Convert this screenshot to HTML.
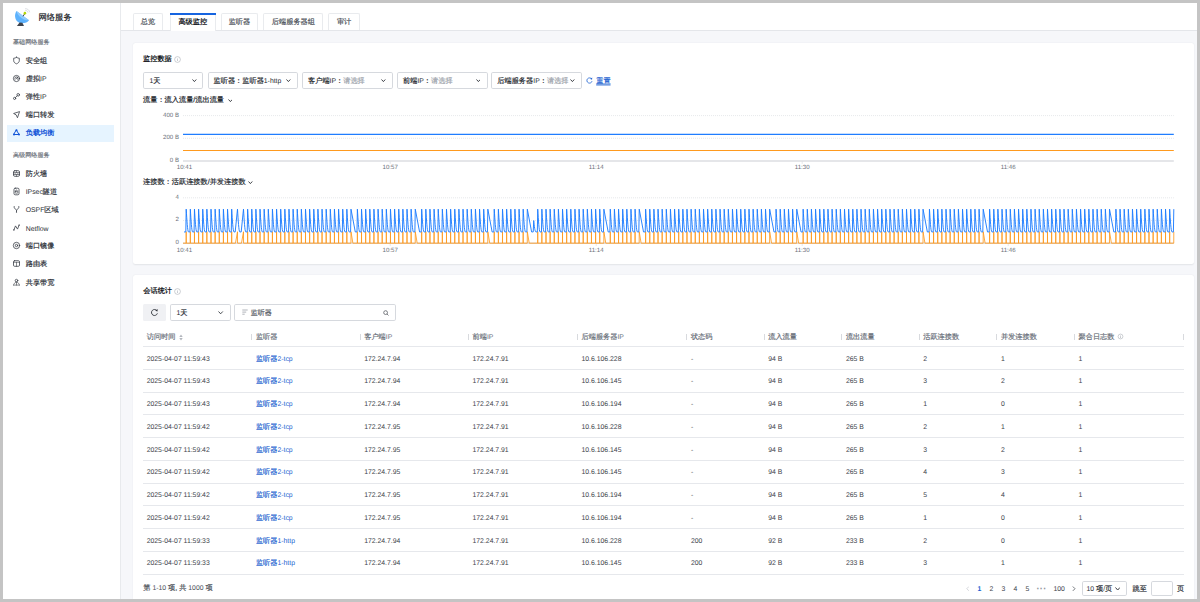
<!DOCTYPE html><html><head><meta charset="utf-8"><title>网络服务</title><style>
*{box-sizing:border-box;margin:0;padding:0}
html,body{width:1200px;height:602px;overflow:hidden;background:#c4c4c4}
body{text-rendering:geometricPrecision;font-family:"Liberation Sans",sans-serif;font-size:7.2px;color:#24282e;-webkit-text-stroke:0.18px;position:relative;line-height:1}
.l{font-size:6.85px;line-height:0}
.c{font-size:7.2px;line-height:0;-webkit-text-stroke:0.18px}
.num,.ax,.l{-webkit-text-stroke:0}
#app{position:absolute;left:3px;top:3px;width:1194px;height:596px;background:#f6f7fa;overflow:hidden}
.abs{position:absolute}
#side{position:absolute;left:0;top:0;width:118px;height:596px;background:#fff;border-right:1px solid #e8eaed}
#tabs{position:absolute;left:118px;top:0;width:1077px;height:27.5px;background:#fff;border-bottom:1px solid #e4e6ea}
.t{position:absolute;white-space:nowrap;transform:translateY(-50%)}
.sec{color:#6b717a;font-size:6.1px}
.mi{color:#2b2f36}
.card{position:absolute;background:#fff;border-radius:2.5px;box-shadow:0 0.5px 1.6px rgba(30,40,60,.09)}
.tab{position:absolute;top:10.4px;height:17.1px;border:1px solid #e9ebee;border-bottom:none;border-radius:2px 2px 0 0;background:#fff;text-align:center;line-height:16px;color:#4a4f57}
.tab.on{background:#fff;color:#15181d;font-weight:bold;height:18.1px;-webkit-text-stroke:0}
.sel{position:absolute;border:1px solid #d6d9de;border-radius:1.8px;background:#fff}
.ph{color:#a0a5ad}
.b{font-weight:bold;color:#15181d;-webkit-text-stroke:0}
.ax{color:#6b7079;font-size:6.1px}
.th{color:#6a707a}
.num{font-size:6.85px;color:#40444b}
.lnk{color:#1b5fd0}
.hl{position:absolute;height:1px;background:#e6e8ec}
</style></head><body><div id="app">
<div id="side"></div>
<div class="abs" style="left:4px;top:122px;width:107.2px;height:16.7px;background:#e6f4ff"></div>
<svg class="abs" style="left:7px;top:1px" width="30" height="26" viewBox="0 0 30 26">
<path d="M6.5 6.9 C3.2 11.6 5.6 19.2 12.1 19.2 C15.2 19.2 17.8 17.9 19 16.2 Z" fill="#5db2fd"/>
<path d="M6.5 6.9 L19 16.2 C14.6 16.9 7.4 12.4 6.5 6.9Z" fill="#8fcbff"/>
<path d="M9.6 18.5 L6.9 21.9 L14 21.9 L12.4 18.8Z" fill="#3f444c"/>
<path d="M13 12.3 L14.7 9.8" stroke="#454a52" stroke-width="1" fill="none"/>
<circle cx="14.9" cy="9.15" r="1.3" fill="#b4d90a"/>
<path d="M15.1 6.3 C16.9 6.3 17.9 7.4 18 8.6 M15.1 4.6 C17.8 4.6 19.6 6.5 19.7 8.3" stroke="#c3c7cd" stroke-width="0.55" fill="none"/>
</svg>
<svg class="abs" style="left:8.70px;top:53.10px" width="9" height="9" viewBox="-4.5 -4.5 9 9" fill="none" stroke="#3a3f47" stroke-width="0.8" stroke-linejoin="round" stroke-linecap="round"><path d="M0 -3.2 C1 -2.5 2 -2.3 2.8 -2.3 V0.2 C2.8 1.8 1.4 2.8 0 3.3 C-1.4 2.8 -2.8 1.8 -2.8 0.2 V-2.3 C-2 -2.3 -1 -2.5 0 -3.2Z"/></svg>
<svg class="abs" style="left:8.70px;top:71.40px" width="9" height="9" viewBox="-4.5 -4.5 9 9" fill="none" stroke="#3a3f47" stroke-width="0.8" stroke-linejoin="round" stroke-linecap="round"><circle r="3.1"/><path d="M-1.6 0.6 A1.7 1.7 0 1 1 1.5 1 M-0.2 0.4 L1.4 -1.4"/></svg>
<svg class="abs" style="left:8.70px;top:89.10px" width="9" height="9" viewBox="-4.5 -4.5 9 9" fill="none" stroke="#3a3f47" stroke-width="0.8" stroke-linejoin="round" stroke-linecap="round"><circle cx="1.7" cy="-1.7" r="1.3"/><circle cx="-1.9" cy="1.9" r="1.1"/><path d="M0.7 -0.7 L-1.1 1.1"/></svg>
<svg class="abs" style="left:8.80px;top:106.90px" width="9" height="9" viewBox="-4.5 -4.5 9 9" fill="none" stroke="#3a3f47" stroke-width="0.8" stroke-linejoin="round" stroke-linecap="round"><path d="M2.7 -2.8 L-2.9 -1 L-0.4 0.3 L0.8 2.9 Z" stroke-width="0.8"/></svg>
<svg class="abs" style="left:8.80px;top:125.30px" width="9" height="9" viewBox="-4.5 -4.5 9 9" fill="none" stroke="#1456d8" stroke-width="0.8" stroke-linejoin="round" stroke-linecap="round"><path d="M0 -2.3 L2.5 2 H-2.5Z" stroke-width="1"/><circle cx="0" cy="-2.3" r="1" fill="#1456d8" stroke="none"/><circle cx="2.5" cy="2" r="1" fill="#1456d8" stroke="none"/><circle cx="-2.5" cy="2" r="1" fill="#1456d8" stroke="none"/></svg>
<svg class="abs" style="left:9.00px;top:165.70px" width="9" height="9" viewBox="-4.5 -4.5 9 9" fill="none" stroke="#3a3f47" stroke-width="0.8" stroke-linejoin="round" stroke-linecap="round"><rect x="-3" y="-2.8" width="6" height="5.6" rx="1.3"/><path d="M-3 -0.9H3M-3 1H3M0 -2.8V-0.9M-1.4 -0.9V1M1.4 -0.9V1M0 1V2.8" stroke-width="0.55"/></svg>
<svg class="abs" style="left:8.90px;top:183.90px" width="9" height="9" viewBox="-4.5 -4.5 9 9" fill="none" stroke="#3a3f47" stroke-width="0.8" stroke-linejoin="round" stroke-linecap="round"><rect x="-2.5" y="-3.3" width="5" height="6.6" rx="1.2"/><rect x="-1.2" y="-0.2" width="2.4" height="1.9" rx="0.3" stroke-width="0.6"/><path d="M-0.7 -0.2 V-0.9 A0.7 0.7 0 0 1 0.7 -0.9 V-0.2" stroke-width="0.55"/></svg>
<svg class="abs" style="left:8.80px;top:202.30px" width="9" height="9" viewBox="-4.5 -4.5 9 9" fill="none" stroke="#3a3f47" stroke-width="0.8" stroke-linejoin="round" stroke-linecap="round"><path d="M-2.3 -3 V-2 C-2.3 -0.6 0 -0.4 0 0.8 V2.2 M2.3 -3 V-2 C2.3 -0.6 0 -0.4 0 0.8"/><circle cx="0" cy="2.6" r="0.6" fill="#3a3f47" stroke="none"/></svg>
<svg class="abs" style="left:9.10px;top:220.00px" width="9" height="9" viewBox="-4.5 -4.5 9 9" fill="none" stroke="#3a3f47" stroke-width="0.8" stroke-linejoin="round" stroke-linecap="round"><path d="M-2.6 2.4 L-1 -1.6 L1 1.6 L2.6 -2.4" stroke-width="0.8"/><circle cx="-2.6" cy="2.4" r="0.7" fill="#3a3f47" stroke="none"/><circle cx="2.6" cy="-2.4" r="0.7" fill="#3a3f47" stroke="none"/></svg>
<svg class="abs" style="left:9.10px;top:238.30px" width="9" height="9" viewBox="-4.5 -4.5 9 9" fill="none" stroke="#3a3f47" stroke-width="0.8" stroke-linejoin="round" stroke-linecap="round"><circle r="3.2"/><circle r="1.2"/></svg>
<svg class="abs" style="left:9.10px;top:256.20px" width="9" height="9" viewBox="-4.5 -4.5 9 9" fill="none" stroke="#3a3f47" stroke-width="0.8" stroke-linejoin="round" stroke-linecap="round"><rect x="-3" y="-2.8" width="6" height="5.6" rx="1.1"/><path d="M-3 -1.2H3M0 -1.2V2.8" stroke-width="0.6"/></svg>
<svg class="abs" style="left:9.10px;top:274.60px" width="9" height="9" viewBox="-4.5 -4.5 9 9" fill="none" stroke="#3a3f47" stroke-width="0.8" stroke-linejoin="round" stroke-linecap="round"><circle cx="0" cy="-1.9" r="1.3"/><path d="M0 -0.6 V2.6 M-3 2.6 H3 M-0.6 -0.2 C-2 0.3 -2.8 1.3 -2.9 2.5 M0.6 -0.2 C2 0.3 2.8 1.3 2.9 2.5" stroke-width="0.6"/></svg>
<div id="t1" class="t " style="left:35.40px;top:13.60px;font-size:8.35px;color:#15181d">网络服务</div>
<div id="t2" class="t sec" style="left:10.00px;top:40.00px;">基础网络服务</div>
<div id="t3" class="t sec" style="left:10.00px;top:152.60px;">高级网络服务</div>
<div id="t4" class="t mi" style="left:22.70px;top:58.00px;">安全组</div>
<div id="t5" class="t mi" style="left:22.70px;top:76.40px;">虚拟<span class="l">IP</span></div>
<div id="t6" class="t mi" style="left:22.70px;top:94.10px;">弹性<span class="l">IP</span></div>
<div id="t7" class="t mi" style="left:22.70px;top:112.30px;">端口转发</div>
<div id="t8" class="t " style="left:22.70px;top:130.30px;color:#1456d8;font-weight:bold;-webkit-text-stroke:0">负载均衡</div>
<div id="t9" class="t mi" style="left:22.70px;top:170.70px;">防火墙</div>
<div id="t10" class="t mi" style="left:22.70px;top:188.70px;"><span class="l">IPsec</span>隧道</div>
<div id="t11" class="t mi" style="left:22.70px;top:206.80px;"><span class="l">OSPF</span>区域</div>
<div id="t12" class="t mi" style="left:22.70px;top:225.70px;"><span class="l">Netflow</span></div>
<div id="t13" class="t mi" style="left:22.70px;top:243.40px;">端口镜像</div>
<div id="t14" class="t mi" style="left:22.70px;top:261.10px;">路由表</div>
<div id="t15" class="t mi" style="left:22.70px;top:279.50px;">共享带宽</div>
<div id="tabs"></div>
<div class="tab" style="left:129.80px;width:30.50px">总览</div>
<div class="tab on" style="left:166.80px;width:46.00px">高级监控</div>
<div class="abs" style="left:166.80px;top:10.2px;width:46.00px;height:1.4px;background:#1664e0"></div>
<div class="tab" style="left:217.50px;width:37.90px">监听器</div>
<div class="tab" style="left:260.40px;width:60.00px">后端服务器组</div>
<div class="tab" style="left:325.40px;width:31.40px">审计</div>
<div class="card" style="left:130.3px;top:40px;width:1061.2px;height:220.9px"></div>
<div id="t16" class="t b" style="left:140.00px;top:56.00px;">监控数据</div>
<svg class="abs" style="left:170.80px;top:52.50px" width="7" height="7" viewBox="0 0 7 7"><circle cx="3.5" cy="3.5" r="2.90" fill="none" stroke="#a4a9b1" stroke-width="0.55"/><path d="M3.5 3.1V5M3.5 2V2.5" stroke="#a4a9b1" stroke-width="0.6"/></svg>
<div class="sel" style="left:139.50px;top:69.10px;width:60.50px;height:16.60px"></div>
<div id="t17" class="t " style="left:146.50px;top:77.50px;"><span class="l">1</span>天</div>
<svg class="abs" style="left:189.10px;top:76.15px" width="4.80" height="3.10" viewBox="0 0 4.80 3.10"><path d="M0.5 0.5 L2.40 2.60 L4.30 0.5" fill="none" stroke="#2b2f36" stroke-width="0.90"/></svg>
<div class="sel" style="left:204.50px;top:69.10px;width:90.50px;height:16.60px"></div>
<div id="t18" class="t " style="left:210.50px;top:77.50px;">监听器：监听器<span class="l">1-http</span></div>
<svg class="abs" style="left:283.10px;top:76.15px" width="4.80" height="3.10" viewBox="0 0 4.80 3.10"><path d="M0.5 0.5 L2.40 2.60 L4.30 0.5" fill="none" stroke="#2b2f36" stroke-width="0.90"/></svg>
<div class="sel" style="left:299.00px;top:69.10px;width:90.50px;height:16.60px"></div>
<div id="t19" class="t " style="left:305.00px;top:77.50px;">客户端<span class="l">IP</span>：<span class="ph">请选择</span></div>
<svg class="abs" style="left:378.10px;top:76.15px" width="4.80" height="3.10" viewBox="0 0 4.80 3.10"><path d="M0.5 0.5 L2.40 2.60 L4.30 0.5" fill="none" stroke="#2b2f36" stroke-width="0.90"/></svg>
<div class="sel" style="left:394.00px;top:69.10px;width:90.50px;height:16.60px"></div>
<div id="t20" class="t " style="left:400.00px;top:77.50px;">前端<span class="l">IP</span>：<span class="ph">请选择</span></div>
<svg class="abs" style="left:472.60px;top:76.15px" width="4.80" height="3.10" viewBox="0 0 4.80 3.10"><path d="M0.5 0.5 L2.40 2.60 L4.30 0.5" fill="none" stroke="#2b2f36" stroke-width="0.90"/></svg>
<div class="sel" style="left:488.30px;top:69.10px;width:90.70px;height:16.60px"></div>
<div id="t21" class="t " style="left:494.30px;top:77.50px;">后端服务器<span class="l">IP</span>：<span class="ph">请选择</span></div>
<svg class="abs" style="left:566.90px;top:76.15px" width="4.80" height="3.10" viewBox="0 0 4.80 3.10"><path d="M0.5 0.5 L2.40 2.60 L4.30 0.5" fill="none" stroke="#2b2f36" stroke-width="0.90"/></svg>
<svg class="abs" style="left:582.10px;top:73.10px" width="9" height="9" viewBox="-4.5 -4.5 9 9"><path d="M2.13 -1.48 A2.60 2.60 0 1 0 2.50 0.73" fill="none" stroke="#1b5fd0" stroke-width="0.80"/><path d="M2.73 -2.99 L2.60 -0.91 L0.65 -1.56 Z" fill="#1b5fd0"/></svg>
<div id="t22" class="t lnk" style="left:593.20px;top:77.50px;text-decoration:underline">重置</div>
<div id="t23" class="t " style="left:140.00px;top:97.00px;">流量：流入流量/流出流量</div>
<svg class="abs" style="left:224.60px;top:95.65px" width="4.80" height="3.10" viewBox="0 0 4.80 3.10"><path d="M0.5 0.5 L2.40 2.60 L4.30 0.5" fill="none" stroke="#2b2f36" stroke-width="0.90"/></svg>
<div id="t24" class="t " style="left:140.00px;top:179.30px;">连接数：活跃连接数/并发连接数</div>
<svg class="abs" style="left:245.10px;top:178.05px" width="4.80" height="3.10" viewBox="0 0 4.80 3.10"><path d="M0.5 0.5 L2.40 2.60 L4.30 0.5" fill="none" stroke="#2b2f36" stroke-width="0.90"/></svg>
<svg class="abs" style="left:0;top:0" width="1194" height="300" viewBox="3 3 1194 300"><path d="M183.0 115.60 H1173.8" stroke="#dfe2e6" stroke-width="0.8" stroke-dasharray="1 1" fill="none"/><path d="M183.0 138.30 H1173.8" stroke="#dfe2e6" stroke-width="0.8" stroke-dasharray="1 1" fill="none"/><path d="M183.0 161.00 H1173.8" stroke="#dcdee2" stroke-width="1.4" fill="none"/><path d="M390.2 161.00 V163.90" stroke="#dcdee2" stroke-width="0.7" fill="none"/><path d="M596.2 161.00 V163.90" stroke="#dcdee2" stroke-width="0.7" fill="none"/><path d="M802.2 161.00 V163.90" stroke="#dcdee2" stroke-width="0.7" fill="none"/><path d="M1008.2 161.00 V163.90" stroke="#dcdee2" stroke-width="0.7" fill="none"/></svg>
<div id="t25" class="t ax" style="right:1018.00px;top:112.50px">400 B</div>
<div id="t26" class="t ax" style="right:1018.00px;top:134.90px">200 B</div>
<div id="t27" class="t ax" style="right:1018.00px;top:158.30px">0 B</div>
<div id="t28" class="t ax" style="left:181.40px;top:165.30px;transform:translate(-50%,-50%)">10:41</div>
<div id="t29" class="t ax" style="left:387.20px;top:165.30px;transform:translate(-50%,-50%)">10:57</div>
<div id="t30" class="t ax" style="left:593.20px;top:165.30px;transform:translate(-50%,-50%)">11:14</div>
<div id="t31" class="t ax" style="left:799.20px;top:165.30px;transform:translate(-50%,-50%)">11:30</div>
<div id="t32" class="t ax" style="left:1005.20px;top:165.30px;transform:translate(-50%,-50%)">11:46</div>
<svg class="abs" style="left:0;top:0" width="1194" height="300" viewBox="3 3 1194 300"><path d="M183.0 134.4 H1173.8" stroke="#1f7dff" stroke-width="1.15" fill="none"/><path d="M183.0 150.5 H1173.8" stroke="#ff9a1e" stroke-width="1.15" fill="none"/></svg>
<svg class="abs" style="left:0;top:0" width="1194" height="300" viewBox="3 3 1194 300"><path d="M183.0 197.80 H1173.8" stroke="#dfe2e6" stroke-width="0.8" stroke-dasharray="1 1" fill="none"/><path d="M183.0 220.50 H1173.8" stroke="#dfe2e6" stroke-width="0.8" stroke-dasharray="1 1" fill="none"/><path d="M183.0 243.20 H1173.8" stroke="#dcdee2" stroke-width="1.4" fill="none"/><path d="M390.2 243.20 V246.10" stroke="#dcdee2" stroke-width="0.7" fill="none"/><path d="M596.2 243.20 V246.10" stroke="#dcdee2" stroke-width="0.7" fill="none"/><path d="M802.2 243.20 V246.10" stroke="#dcdee2" stroke-width="0.7" fill="none"/><path d="M1008.2 243.20 V246.10" stroke="#dcdee2" stroke-width="0.7" fill="none"/></svg>
<div id="t33" class="t ax" style="right:1018.00px;top:195.40px">4</div>
<div id="t34" class="t ax" style="right:1018.00px;top:217.30px">2</div>
<div id="t35" class="t ax" style="right:1018.00px;top:239.70px">0</div>
<div id="t36" class="t ax" style="left:181.40px;top:247.70px;transform:translate(-50%,-50%)">10:41</div>
<div id="t37" class="t ax" style="left:387.20px;top:247.70px;transform:translate(-50%,-50%)">10:57</div>
<div id="t38" class="t ax" style="left:593.20px;top:247.70px;transform:translate(-50%,-50%)">11:14</div>
<div id="t39" class="t ax" style="left:799.20px;top:247.70px;transform:translate(-50%,-50%)">11:30</div>
<div id="t40" class="t ax" style="left:1005.20px;top:247.70px;transform:translate(-50%,-50%)">11:46</div>
<svg class="abs" style="left:0;top:0" width="1194" height="300" viewBox="3 3 1194 300"><path d="M183.00 243.20 L186.15 243.20 L186.20 231.75 L186.25 243.20 L190.28 243.20 L190.33 231.75 L190.38 243.20 L194.42 243.20 L194.47 231.75 L194.52 243.20 L198.55 243.20 L198.60 231.75 L198.65 243.20 L202.69 243.20 L202.74 231.75 L202.79 243.20 L206.82 243.20 L206.87 231.75 L206.92 243.20 L210.96 243.20 L211.01 231.75 L211.06 243.20 L215.09 243.20 L215.14 231.75 L215.19 243.20 L219.23 243.20 L219.28 231.75 L219.33 243.20 L223.36 243.20 L223.41 231.75 L223.46 243.20 L227.49 243.20 L227.54 231.75 L227.59 243.20 L231.63 243.20 L231.68 231.75 L231.73 243.20 L235.49 243.20 L237.49 231.75 L237.54 243.20 L241.49 243.20 L243.49 231.75 L243.54 243.20 L247.58 243.20 L247.63 231.75 L247.68 243.20 L251.71 243.20 L251.76 231.75 L251.81 243.20 L255.84 243.20 L255.89 231.75 L255.94 243.20 L259.98 243.20 L260.03 231.75 L260.08 243.20 L264.11 243.20 L264.16 231.75 L264.21 243.20 L268.25 243.20 L268.30 231.75 L268.35 243.20 L272.38 243.20 L272.43 231.75 L272.48 243.20 L276.52 243.20 L276.57 231.75 L276.62 243.20 L280.65 243.20 L280.70 231.75 L280.75 243.20 L284.79 243.20 L284.84 231.75 L284.89 243.20 L288.92 243.20 L288.97 231.75 L289.02 243.20 L293.05 243.20 L293.10 231.75 L293.15 243.20 L297.19 243.20 L297.24 231.75 L297.29 243.20 L301.32 243.20 L301.37 231.75 L301.42 243.20 L305.46 243.20 L305.51 231.75 L305.56 243.20 L309.59 243.20 L309.64 231.75 L309.69 243.20 L313.73 243.20 L313.78 231.75 L313.83 243.20 L317.86 243.20 L317.91 231.75 L317.96 243.20 L322.00 243.20 L322.05 231.75 L322.10 243.20 L326.13 243.20 L326.18 231.75 L326.23 243.20 L330.26 243.20 L330.31 231.75 L330.36 243.20 L334.40 243.20 L334.45 231.75 L334.50 243.20 L338.53 243.20 L338.58 231.75 L338.63 243.20 L342.67 243.20 L342.72 231.75 L342.77 243.20 L346.80 243.20 L346.85 231.75 L346.90 243.20 L350.94 243.20 L350.99 231.75 L352.89 243.20 L357.34 243.20 L357.39 231.75 L357.44 243.20 L361.48 243.20 L361.53 231.75 L361.58 243.20 L365.61 243.20 L365.66 231.75 L365.71 243.20 L369.75 243.20 L369.80 231.75 L369.85 243.20 L373.88 243.20 L373.93 231.75 L373.98 243.20 L378.02 243.20 L378.07 231.75 L378.12 243.20 L382.15 243.20 L382.20 231.75 L382.25 243.20 L386.28 243.20 L386.33 231.75 L386.38 243.20 L390.42 243.20 L390.47 231.75 L390.52 243.20 L394.55 243.20 L394.60 231.75 L394.65 243.20 L398.69 243.20 L398.74 231.75 L398.79 243.20 L402.82 243.20 L402.87 231.75 L402.92 243.20 L406.96 243.20 L407.01 231.75 L407.06 243.20 L411.09 243.20 L411.14 231.75 L411.19 243.20 L415.23 243.20 L415.28 231.75 L417.18 243.20 L421.63 243.20 L421.68 231.75 L421.73 243.20 L425.77 243.20 L425.82 231.75 L425.87 243.20 L429.90 243.20 L429.95 231.75 L430.00 243.20 L434.04 243.20 L434.09 231.75 L434.14 243.20 L438.17 243.20 L438.22 231.75 L438.27 243.20 L442.30 243.20 L442.35 231.75 L442.40 243.20 L446.44 243.20 L446.49 231.75 L446.54 243.20 L450.57 243.20 L450.62 231.75 L450.67 243.20 L454.71 243.20 L454.76 231.75 L454.81 243.20 L458.84 243.20 L458.89 231.75 L458.94 243.20 L462.98 243.20 L463.03 231.75 L463.08 243.20 L467.11 243.20 L467.16 231.75 L467.21 243.20 L471.25 243.20 L471.30 231.75 L471.35 243.20 L475.38 243.20 L475.43 231.75 L475.48 243.20 L479.51 243.20 L479.56 231.75 L479.61 243.20 L483.65 243.20 L483.70 231.75 L483.75 243.20 L487.78 243.20 L487.83 231.75 L489.73 243.20 L494.19 243.20 L494.24 231.75 L494.29 243.20 L498.33 243.20 L498.38 231.75 L498.43 243.20 L502.46 243.20 L502.51 231.75 L502.56 243.20 L506.59 243.20 L506.64 231.75 L506.69 243.20 L510.73 243.20 L510.78 231.75 L510.83 243.20 L514.86 243.20 L514.91 231.75 L514.96 243.20 L519.00 243.20 L519.05 231.75 L519.10 243.20 L523.13 243.20 L523.18 231.75 L523.23 243.20 L527.27 243.20 L527.32 231.75 L529.22 243.20 L537.68 243.20 L537.73 231.75 L537.78 243.20 L541.81 243.20 L541.86 231.75 L541.91 243.20 L545.95 243.20 L546.00 231.75 L546.05 243.20 L550.08 243.20 L550.13 231.75 L550.18 243.20 L554.22 243.20 L554.27 231.75 L554.32 243.20 L558.35 243.20 L558.40 231.75 L558.45 243.20 L562.48 243.20 L562.53 231.75 L562.58 243.20 L566.62 243.20 L566.67 231.75 L566.72 243.20 L570.75 243.20 L570.80 231.75 L570.85 243.20 L574.89 243.20 L574.94 231.75 L574.99 243.20 L579.02 243.20 L579.07 231.75 L579.12 243.20 L583.16 243.20 L583.21 231.75 L583.26 243.20 L587.29 243.20 L587.34 231.75 L587.39 243.20 L591.42 243.20 L591.47 231.75 L591.52 243.20 L595.56 243.20 L595.61 231.75 L595.66 243.20 L599.69 243.20 L599.74 231.75 L599.79 243.20 L603.83 243.20 L603.88 231.75 L605.78 243.20 L610.24 243.20 L610.29 231.75 L610.34 243.20 L614.37 243.20 L614.42 231.75 L614.47 243.20 L618.50 243.20 L618.55 231.75 L618.60 243.20 L622.64 243.20 L622.69 231.75 L622.74 243.20 L626.77 243.20 L626.82 231.75 L626.87 243.20 L630.91 243.20 L630.96 231.75 L631.01 243.20 L635.04 243.20 L635.09 231.75 L635.14 243.20 L639.18 243.20 L639.23 231.75 L641.13 243.20 L645.58 243.20 L645.63 231.75 L645.68 243.20 L649.72 243.20 L649.77 231.75 L649.82 243.20 L653.85 243.20 L653.90 231.75 L653.95 243.20 L657.99 243.20 L658.04 231.75 L658.09 243.20 L662.12 243.20 L662.17 231.75 L662.22 243.20 L666.26 243.20 L666.31 231.75 L666.36 243.20 L670.39 243.20 L670.44 231.75 L670.49 243.20 L674.52 243.20 L674.57 231.75 L674.62 243.20 L678.66 243.20 L678.71 231.75 L678.76 243.20 L682.79 243.20 L682.84 231.75 L682.89 243.20 L686.93 243.20 L686.98 231.75 L687.03 243.20 L691.06 243.20 L691.11 231.75 L691.16 243.20 L695.20 243.20 L695.25 231.75 L695.30 243.20 L699.33 243.20 L699.38 231.75 L699.43 243.20 L703.47 243.20 L703.52 231.75 L703.57 243.20 L707.60 243.20 L707.65 231.75 L707.70 243.20 L711.73 243.20 L711.78 231.75 L711.83 243.20 L715.87 243.20 L715.92 231.75 L715.97 243.20 L720.00 243.20 L720.05 231.75 L720.10 243.20 L724.14 243.20 L724.19 231.75 L724.24 243.20 L728.27 243.20 L728.32 231.75 L728.37 243.20 L732.41 243.20 L732.46 231.75 L732.51 243.20 L736.54 243.20 L736.59 231.75 L736.64 243.20 L740.68 243.20 L740.73 231.75 L740.78 243.20 L744.81 243.20 L744.86 231.75 L744.91 243.20 L748.94 243.20 L748.99 231.75 L749.04 243.20 L753.08 243.20 L753.13 231.75 L753.18 243.20 L757.21 243.20 L757.26 231.75 L757.31 243.20 L761.35 243.20 L761.40 231.75 L761.45 243.20 L765.48 243.20 L765.53 231.75 L765.58 243.20 L769.62 243.20 L769.67 231.75 L771.57 243.20 L776.02 243.20 L776.07 231.75 L776.12 243.20 L780.16 243.20 L780.21 231.75 L780.26 243.20 L784.29 243.20 L784.34 231.75 L784.39 243.20 L788.43 243.20 L788.48 231.75 L788.53 243.20 L792.56 243.20 L792.61 231.75 L792.66 243.20 L796.70 243.20 L796.75 231.75 L798.65 243.20 L803.10 243.20 L803.15 231.75 L803.20 243.20 L807.24 243.20 L807.29 231.75 L807.34 243.20 L811.37 243.20 L811.42 231.75 L811.47 243.20 L815.51 243.20 L815.56 231.75 L815.61 243.20 L819.64 243.20 L819.69 231.75 L819.74 243.20 L823.77 243.20 L823.82 231.75 L823.87 243.20 L827.91 243.20 L827.96 231.75 L828.01 243.20 L832.04 243.20 L832.09 231.75 L832.14 243.20 L836.18 243.20 L836.23 231.75 L836.28 243.20 L840.31 243.20 L840.36 231.75 L840.41 243.20 L844.45 243.20 L844.50 231.75 L844.55 243.20 L848.58 243.20 L848.63 231.75 L848.68 243.20 L852.72 243.20 L852.77 231.75 L852.82 243.20 L856.85 243.20 L856.90 231.75 L856.95 243.20 L860.98 243.20 L861.03 231.75 L861.08 243.20 L865.12 243.20 L865.17 231.75 L865.22 243.20 L869.25 243.20 L869.30 231.75 L869.35 243.20 L873.39 243.20 L873.44 231.75 L873.49 243.20 L877.52 243.20 L877.57 231.75 L877.62 243.20 L881.66 243.20 L881.71 231.75 L881.76 243.20 L885.79 243.20 L885.84 231.75 L885.89 243.20 L889.93 243.20 L889.98 231.75 L890.03 243.20 L894.06 243.20 L894.11 231.75 L894.16 243.20 L898.19 243.20 L898.24 231.75 L898.29 243.20 L902.33 243.20 L902.38 231.75 L902.43 243.20 L906.46 243.20 L906.51 231.75 L906.56 243.20 L910.60 243.20 L910.65 231.75 L910.70 243.20 L914.73 243.20 L914.78 231.75 L914.83 243.20 L918.87 243.20 L918.92 231.75 L918.97 243.20 L923.00 243.20 L923.05 231.75 L924.95 243.20 L929.41 243.20 L929.46 231.75 L929.51 243.20 L933.54 243.20 L933.59 231.75 L933.64 243.20 L937.68 243.20 L937.73 231.75 L937.78 243.20 L941.81 243.20 L941.86 231.75 L941.91 243.20 L945.95 243.20 L946.00 231.75 L946.05 243.20 L950.08 243.20 L950.13 231.75 L950.18 243.20 L954.21 243.20 L954.26 231.75 L954.31 243.20 L958.35 243.20 L958.40 231.75 L958.45 243.20 L962.48 243.20 L962.53 231.75 L962.58 243.20 L966.62 243.20 L966.67 231.75 L966.72 243.20 L970.75 243.20 L970.80 231.75 L970.85 243.20 L974.89 243.20 L974.94 231.75 L974.99 243.20 L979.02 243.20 L979.07 231.75 L979.12 243.20 L983.16 243.20 L983.21 231.75 L985.11 243.20 L989.56 243.20 L989.61 231.75 L989.66 243.20 L993.70 243.20 L993.75 231.75 L993.80 243.20 L997.83 243.20 L997.88 231.75 L997.93 243.20 L1001.97 243.20 L1002.02 231.75 L1002.07 243.20 L1006.10 243.20 L1006.15 231.75 L1006.20 243.20 L1010.23 243.20 L1010.28 231.75 L1010.33 243.20 L1014.37 243.20 L1014.42 231.75 L1014.47 243.20 L1018.50 243.20 L1018.55 231.75 L1018.60 243.20 L1022.64 243.20 L1022.69 231.75 L1022.74 243.20 L1026.77 243.20 L1026.82 231.75 L1026.87 243.20 L1030.91 243.20 L1030.96 231.75 L1031.01 243.20 L1035.04 243.20 L1035.09 231.75 L1035.14 243.20 L1039.18 243.20 L1039.23 231.75 L1039.28 243.20 L1043.31 243.20 L1043.36 231.75 L1043.41 243.20 L1047.44 243.20 L1047.49 231.75 L1047.54 243.20 L1051.58 243.20 L1051.63 231.75 L1051.68 243.20 L1055.71 243.20 L1055.76 231.75 L1055.81 243.20 L1059.85 243.20 L1059.90 231.75 L1059.95 243.20 L1063.98 243.20 L1064.03 231.75 L1064.08 243.20 L1068.12 243.20 L1068.17 231.75 L1068.22 243.20 L1072.25 243.20 L1072.30 231.75 L1072.35 243.20 L1076.39 243.20 L1076.44 231.75 L1076.49 243.20 L1080.52 243.20 L1080.57 231.75 L1080.62 243.20 L1084.65 243.20 L1084.70 231.75 L1084.75 243.20 L1088.79 243.20 L1088.84 231.75 L1088.89 243.20 L1092.92 243.20 L1092.97 231.75 L1093.02 243.20 L1097.06 243.20 L1097.11 231.75 L1097.16 243.20 L1101.19 243.20 L1101.24 231.75 L1101.29 243.20 L1105.33 243.20 L1105.38 231.75 L1105.43 243.20 L1109.46 243.20 L1109.51 231.75 L1111.41 243.20 L1115.87 243.20 L1115.92 231.75 L1115.97 243.20 L1120.00 243.20 L1120.05 231.75 L1120.10 243.20 L1124.14 243.20 L1124.19 231.75 L1124.24 243.20 L1128.27 243.20 L1128.32 231.75 L1128.37 243.20 L1132.41 243.20 L1132.46 231.75 L1132.51 243.20 L1136.54 243.20 L1136.59 231.75 L1136.64 243.20 L1140.67 243.20 L1140.72 231.75 L1140.77 243.20 L1144.81 243.20 L1144.86 231.75 L1144.91 243.20 L1148.94 243.20 L1148.99 231.75 L1149.04 243.20 L1153.08 243.20 L1153.13 231.75 L1153.18 243.20 L1157.21 243.20 L1157.26 231.75 L1157.31 243.20 L1161.35 243.20 L1161.40 231.75 L1161.45 243.20 L1165.48 243.20 L1165.53 231.75 L1165.58 243.20 L1169.62 243.20 L1169.67 231.75 L1169.72 243.20 L1173.75 243.20 L1173.80 231.75" stroke="#ff9a1e" stroke-width="0.85" fill="none" stroke-linejoin="round"/><path d="M184.00 231.95 L185.80 231.95 L186.20 209.15 C186.90 220.15 187.50 231.35 188.50 231.95 L189.93 231.95 L190.33 209.15 C191.03 220.15 191.63 231.35 192.63 231.95 L194.07 231.95 L194.47 209.15 C195.17 220.15 195.77 231.35 196.77 231.95 L198.20 231.95 L198.60 209.15 C199.30 220.15 199.90 231.35 200.90 231.95 L202.34 231.95 L202.74 209.15 C203.44 220.15 204.04 231.35 205.04 231.95 L206.47 231.95 L206.87 209.15 C207.57 220.15 208.17 231.35 209.17 231.95 L210.61 231.95 L211.01 209.15 C211.71 220.15 212.31 231.35 213.31 231.95 L214.74 231.95 L215.14 209.15 C215.84 220.15 216.44 231.35 217.44 231.95 L218.88 231.95 L219.28 209.15 C219.98 220.15 220.58 231.35 221.58 231.95 L223.01 231.95 L223.41 209.15 C224.11 220.15 224.71 231.35 225.71 231.95 L227.14 231.95 L227.54 209.15 C228.24 220.15 228.84 231.35 229.84 231.95 L231.28 231.95 L231.68 209.15 C232.38 220.15 232.98 231.35 233.98 231.95 L235.19 231.95 L237.49 209.15 C238.19 220.15 238.79 231.35 239.79 231.95 L241.19 231.95 L243.49 209.15 C244.19 220.15 244.79 231.35 245.79 231.95 L247.23 231.95 L247.63 209.15 C248.33 220.15 248.93 231.35 249.93 231.95 L251.36 231.95 L251.76 209.15 C252.46 220.15 253.06 231.35 254.06 231.95 L255.49 231.95 L255.89 209.15 C256.59 220.15 257.19 231.35 258.19 231.95 L259.63 231.95 L260.03 209.15 C260.73 220.15 261.33 231.35 262.33 231.95 L263.76 231.95 L264.16 209.15 C264.86 220.15 265.46 231.35 266.46 231.95 L267.90 231.95 L268.30 209.15 C269.00 220.15 269.60 231.35 270.60 231.95 L272.03 231.95 L272.43 209.15 C273.13 220.15 273.73 231.35 274.73 231.95 L276.17 231.95 L276.57 209.15 C277.27 220.15 277.87 231.35 278.87 231.95 L280.30 231.95 L280.70 209.15 C281.40 220.15 282.00 231.35 283.00 231.95 L284.44 231.95 L284.84 209.15 C285.54 220.15 286.14 231.35 287.14 231.95 L288.57 231.95 L288.97 209.15 C289.67 220.15 290.27 231.35 291.27 231.95 L292.70 231.95 L293.10 209.15 C293.80 220.15 294.40 231.35 295.40 231.95 L296.84 231.95 L297.24 209.15 C297.94 220.15 298.54 231.35 299.54 231.95 L300.97 231.95 L301.37 209.15 C302.07 220.15 302.67 231.35 303.67 231.95 L305.11 231.95 L305.51 209.15 C306.21 220.15 306.81 231.35 307.81 231.95 L309.24 231.95 L309.64 209.15 C310.34 220.15 310.94 231.35 311.94 231.95 L313.38 231.95 L313.78 209.15 C314.48 220.15 315.08 231.35 316.08 231.95 L317.51 231.95 L317.91 209.15 C318.61 220.15 319.21 231.35 320.21 231.95 L321.65 231.95 L322.05 209.15 C322.75 220.15 323.35 231.35 324.35 231.95 L325.78 231.95 L326.18 209.15 C326.88 220.15 327.48 231.35 328.48 231.95 L329.91 231.95 L330.31 209.15 C331.01 220.15 331.61 231.35 332.61 231.95 L334.05 231.95 L334.45 209.15 C335.15 220.15 335.75 231.35 336.75 231.95 L338.18 231.95 L338.58 209.15 C339.28 220.15 339.88 231.35 340.88 231.95 L342.32 231.95 L342.72 209.15 C343.42 220.15 344.02 231.35 345.02 231.95 L346.45 231.95 L346.85 209.15 C347.55 220.15 348.15 231.35 349.15 231.95 L350.59 231.95 L350.99 209.15 L355.29 231.95 L356.99 231.95 L357.39 209.15 C358.09 220.15 358.69 231.35 359.69 231.95 L361.13 231.95 L361.53 209.15 C362.23 220.15 362.83 231.35 363.83 231.95 L365.26 231.95 L365.66 209.15 C366.36 220.15 366.96 231.35 367.96 231.95 L369.40 231.95 L369.80 209.15 C370.50 220.15 371.10 231.35 372.10 231.95 L373.53 231.95 L373.93 209.15 C374.63 220.15 375.23 231.35 376.23 231.95 L377.67 231.95 L378.07 209.15 C378.77 220.15 379.37 231.35 380.37 231.95 L381.80 231.95 L382.20 209.15 C382.90 220.15 383.50 231.35 384.50 231.95 L385.93 231.95 L386.33 209.15 C387.03 220.15 387.63 231.35 388.63 231.95 L390.07 231.95 L390.47 209.15 C391.17 220.15 391.77 231.35 392.77 231.95 L394.20 231.95 L394.60 209.15 C395.30 220.15 395.90 231.35 396.90 231.95 L398.34 231.95 L398.74 209.15 C399.44 220.15 400.04 231.35 401.04 231.95 L402.47 231.95 L402.87 209.15 C403.57 220.15 404.17 231.35 405.17 231.95 L406.61 231.95 L407.01 209.15 C407.71 220.15 408.31 231.35 409.31 231.95 L410.74 231.95 L411.14 209.15 C411.84 220.15 412.44 231.35 413.44 231.95 L414.88 231.95 L415.28 209.15 L419.58 231.95 L421.28 231.95 L421.68 209.15 C422.38 220.15 422.98 231.35 423.98 231.95 L425.42 231.95 L425.82 209.15 C426.52 220.15 427.12 231.35 428.12 231.95 L429.55 231.95 L429.95 209.15 C430.65 220.15 431.25 231.35 432.25 231.95 L433.69 231.95 L434.09 209.15 C434.79 220.15 435.39 231.35 436.39 231.95 L437.82 231.95 L438.22 209.15 C438.92 220.15 439.52 231.35 440.52 231.95 L441.95 231.95 L442.35 209.15 C443.05 220.15 443.65 231.35 444.65 231.95 L446.09 231.95 L446.49 209.15 C447.19 220.15 447.79 231.35 448.79 231.95 L450.22 231.95 L450.62 209.15 C451.32 220.15 451.92 231.35 452.92 231.95 L454.36 231.95 L454.76 209.15 C455.46 220.15 456.06 231.35 457.06 231.95 L458.49 231.95 L458.89 209.15 C459.59 220.15 460.19 231.35 461.19 231.95 L462.63 231.95 L463.03 209.15 C463.73 220.15 464.33 231.35 465.33 231.95 L466.76 231.95 L467.16 209.15 C467.86 220.15 468.46 231.35 469.46 231.95 L470.90 231.95 L471.30 209.15 C472.00 220.15 472.60 231.35 473.60 231.95 L475.03 231.95 L475.43 209.15 C476.13 220.15 476.73 231.35 477.73 231.95 L479.16 231.95 L479.56 209.15 C480.26 220.15 480.86 231.35 481.86 231.95 L483.30 231.95 L483.70 209.15 C484.40 220.15 485.00 231.35 486.00 231.95 L487.43 231.95 L487.83 209.15 L492.13 231.95 L493.84 231.95 L494.24 209.15 C494.94 220.15 495.54 231.35 496.54 231.95 L497.98 231.95 L498.38 209.15 C499.08 220.15 499.68 231.35 500.68 231.95 L502.11 231.95 L502.51 209.15 C503.21 220.15 503.81 231.35 504.81 231.95 L506.24 231.95 L506.64 209.15 C507.34 220.15 507.94 231.35 508.94 231.95 L510.38 231.95 L510.78 209.15 C511.48 220.15 512.08 231.35 513.08 231.95 L514.51 231.95 L514.91 209.15 C515.61 220.15 516.21 231.35 517.21 231.95 L518.65 231.95 L519.05 209.15 C519.75 220.15 520.35 231.35 521.35 231.95 L522.78 231.95 L523.18 209.15 C523.88 220.15 524.48 231.35 525.48 231.95 L526.92 231.95 L527.32 209.15 L531.62 231.95 L533.22 231.95 L533.72 220.55 C534.32 226.55 534.92 231.55 535.92 231.95 L537.33 231.95 L537.73 209.15 C538.43 220.15 539.03 231.35 540.03 231.95 L541.46 231.95 L541.86 209.15 C542.56 220.15 543.16 231.35 544.16 231.95 L545.60 231.95 L546.00 209.15 C546.70 220.15 547.30 231.35 548.30 231.95 L549.73 231.95 L550.13 209.15 C550.83 220.15 551.43 231.35 552.43 231.95 L553.87 231.95 L554.27 209.15 C554.97 220.15 555.57 231.35 556.57 231.95 L558.00 231.95 L558.40 209.15 C559.10 220.15 559.70 231.35 560.70 231.95 L562.13 231.95 L562.53 209.15 C563.23 220.15 563.83 231.35 564.83 231.95 L566.27 231.95 L566.67 209.15 C567.37 220.15 567.97 231.35 568.97 231.95 L570.40 231.95 L570.80 209.15 C571.50 220.15 572.10 231.35 573.10 231.95 L574.54 231.95 L574.94 209.15 C575.64 220.15 576.24 231.35 577.24 231.95 L578.67 231.95 L579.07 209.15 C579.77 220.15 580.37 231.35 581.37 231.95 L582.81 231.95 L583.21 209.15 C583.91 220.15 584.51 231.35 585.51 231.95 L586.94 231.95 L587.34 209.15 C588.04 220.15 588.64 231.35 589.64 231.95 L591.07 231.95 L591.47 209.15 C592.17 220.15 592.77 231.35 593.77 231.95 L595.21 231.95 L595.61 209.15 C596.31 220.15 596.91 231.35 597.91 231.95 L599.34 231.95 L599.74 209.15 C600.44 220.15 601.04 231.35 602.04 231.95 L603.48 231.95 L603.88 209.15 L608.18 231.95 L609.89 231.95 L610.29 209.15 C610.99 220.15 611.59 231.35 612.59 231.95 L614.02 231.95 L614.42 209.15 C615.12 220.15 615.72 231.35 616.72 231.95 L618.15 231.95 L618.55 209.15 C619.25 220.15 619.85 231.35 620.85 231.95 L622.29 231.95 L622.69 209.15 C623.39 220.15 623.99 231.35 624.99 231.95 L626.42 231.95 L626.82 209.15 C627.52 220.15 628.12 231.35 629.12 231.95 L630.56 231.95 L630.96 209.15 C631.66 220.15 632.26 231.35 633.26 231.95 L634.69 231.95 L635.09 209.15 C635.79 220.15 636.39 231.35 637.39 231.95 L638.83 231.95 L639.23 209.15 L643.53 231.95 L645.23 231.95 L645.63 209.15 C646.33 220.15 646.93 231.35 647.93 231.95 L649.37 231.95 L649.77 209.15 C650.47 220.15 651.07 231.35 652.07 231.95 L653.50 231.95 L653.90 209.15 C654.60 220.15 655.20 231.35 656.20 231.95 L657.64 231.95 L658.04 209.15 C658.74 220.15 659.34 231.35 660.34 231.95 L661.77 231.95 L662.17 209.15 C662.87 220.15 663.47 231.35 664.47 231.95 L665.91 231.95 L666.31 209.15 C667.01 220.15 667.61 231.35 668.61 231.95 L670.04 231.95 L670.44 209.15 C671.14 220.15 671.74 231.35 672.74 231.95 L674.17 231.95 L674.57 209.15 C675.27 220.15 675.87 231.35 676.87 231.95 L678.31 231.95 L678.71 209.15 C679.41 220.15 680.01 231.35 681.01 231.95 L682.44 231.95 L682.84 209.15 C683.54 220.15 684.14 231.35 685.14 231.95 L686.58 231.95 L686.98 209.15 C687.68 220.15 688.28 231.35 689.28 231.95 L690.71 231.95 L691.11 209.15 C691.81 220.15 692.41 231.35 693.41 231.95 L694.85 231.95 L695.25 209.15 C695.95 220.15 696.55 231.35 697.55 231.95 L698.98 231.95 L699.38 209.15 C700.08 220.15 700.68 231.35 701.68 231.95 L703.12 231.95 L703.52 209.15 C704.22 220.15 704.82 231.35 705.82 231.95 L707.25 231.95 L707.65 209.15 C708.35 220.15 708.95 231.35 709.95 231.95 L711.38 231.95 L711.78 209.15 C712.48 220.15 713.08 231.35 714.08 231.95 L715.52 231.95 L715.92 209.15 C716.62 220.15 717.22 231.35 718.22 231.95 L719.65 231.95 L720.05 209.15 C720.75 220.15 721.35 231.35 722.35 231.95 L723.79 231.95 L724.19 209.15 C724.89 220.15 725.49 231.35 726.49 231.95 L727.92 231.95 L728.32 209.15 C729.02 220.15 729.62 231.35 730.62 231.95 L732.06 231.95 L732.46 209.15 C733.16 220.15 733.76 231.35 734.76 231.95 L736.19 231.95 L736.59 209.15 C737.29 220.15 737.89 231.35 738.89 231.95 L740.33 231.95 L740.73 209.15 C741.43 220.15 742.03 231.35 743.03 231.95 L744.46 231.95 L744.86 209.15 C745.56 220.15 746.16 231.35 747.16 231.95 L748.59 231.95 L748.99 209.15 C749.69 220.15 750.29 231.35 751.29 231.95 L752.73 231.95 L753.13 209.15 C753.83 220.15 754.43 231.35 755.43 231.95 L756.86 231.95 L757.26 209.15 C757.96 220.15 758.56 231.35 759.56 231.95 L761.00 231.95 L761.40 209.15 C762.10 220.15 762.70 231.35 763.70 231.95 L765.13 231.95 L765.53 209.15 C766.23 220.15 766.83 231.35 767.83 231.95 L769.27 231.95 L769.67 209.15 L773.97 231.95 L775.67 231.95 L776.07 209.15 C776.77 220.15 777.37 231.35 778.37 231.95 L779.81 231.95 L780.21 209.15 C780.91 220.15 781.51 231.35 782.51 231.95 L783.94 231.95 L784.34 209.15 C785.04 220.15 785.64 231.35 786.64 231.95 L788.08 231.95 L788.48 209.15 C789.18 220.15 789.78 231.35 790.78 231.95 L792.21 231.95 L792.61 209.15 C793.31 220.15 793.91 231.35 794.91 231.95 L796.35 231.95 L796.75 209.15 L801.05 231.95 L802.75 231.95 L803.15 209.15 C803.85 220.15 804.45 231.35 805.45 231.95 L806.89 231.95 L807.29 209.15 C807.99 220.15 808.59 231.35 809.59 231.95 L811.02 231.95 L811.42 209.15 C812.12 220.15 812.72 231.35 813.72 231.95 L815.16 231.95 L815.56 209.15 C816.26 220.15 816.86 231.35 817.86 231.95 L819.29 231.95 L819.69 209.15 C820.39 220.15 820.99 231.35 821.99 231.95 L823.42 231.95 L823.82 209.15 C824.52 220.15 825.12 231.35 826.12 231.95 L827.56 231.95 L827.96 209.15 C828.66 220.15 829.26 231.35 830.26 231.95 L831.69 231.95 L832.09 209.15 C832.79 220.15 833.39 231.35 834.39 231.95 L835.83 231.95 L836.23 209.15 C836.93 220.15 837.53 231.35 838.53 231.95 L839.96 231.95 L840.36 209.15 C841.06 220.15 841.66 231.35 842.66 231.95 L844.10 231.95 L844.50 209.15 C845.20 220.15 845.80 231.35 846.80 231.95 L848.23 231.95 L848.63 209.15 C849.33 220.15 849.93 231.35 850.93 231.95 L852.37 231.95 L852.77 209.15 C853.47 220.15 854.07 231.35 855.07 231.95 L856.50 231.95 L856.90 209.15 C857.60 220.15 858.20 231.35 859.20 231.95 L860.63 231.95 L861.03 209.15 C861.73 220.15 862.33 231.35 863.33 231.95 L864.77 231.95 L865.17 209.15 C865.87 220.15 866.47 231.35 867.47 231.95 L868.90 231.95 L869.30 209.15 C870.00 220.15 870.60 231.35 871.60 231.95 L873.04 231.95 L873.44 209.15 C874.14 220.15 874.74 231.35 875.74 231.95 L877.17 231.95 L877.57 209.15 C878.27 220.15 878.87 231.35 879.87 231.95 L881.31 231.95 L881.71 209.15 C882.41 220.15 883.01 231.35 884.01 231.95 L885.44 231.95 L885.84 209.15 C886.54 220.15 887.14 231.35 888.14 231.95 L889.58 231.95 L889.98 209.15 C890.68 220.15 891.28 231.35 892.28 231.95 L893.71 231.95 L894.11 209.15 C894.81 220.15 895.41 231.35 896.41 231.95 L897.84 231.95 L898.24 209.15 C898.94 220.15 899.54 231.35 900.54 231.95 L901.98 231.95 L902.38 209.15 C903.08 220.15 903.68 231.35 904.68 231.95 L906.11 231.95 L906.51 209.15 C907.21 220.15 907.81 231.35 908.81 231.95 L910.25 231.95 L910.65 209.15 C911.35 220.15 911.95 231.35 912.95 231.95 L914.38 231.95 L914.78 209.15 C915.48 220.15 916.08 231.35 917.08 231.95 L918.52 231.95 L918.92 209.15 C919.62 220.15 920.22 231.35 921.22 231.95 L922.65 231.95 L923.05 209.15 L927.35 231.95 L929.06 231.95 L929.46 209.15 C930.16 220.15 930.76 231.35 931.76 231.95 L933.19 231.95 L933.59 209.15 C934.29 220.15 934.89 231.35 935.89 231.95 L937.33 231.95 L937.73 209.15 C938.43 220.15 939.03 231.35 940.03 231.95 L941.46 231.95 L941.86 209.15 C942.56 220.15 943.16 231.35 944.16 231.95 L945.60 231.95 L946.00 209.15 C946.70 220.15 947.30 231.35 948.30 231.95 L949.73 231.95 L950.13 209.15 C950.83 220.15 951.43 231.35 952.43 231.95 L953.86 231.95 L954.26 209.15 C954.96 220.15 955.56 231.35 956.56 231.95 L958.00 231.95 L958.40 209.15 C959.10 220.15 959.70 231.35 960.70 231.95 L962.13 231.95 L962.53 209.15 C963.23 220.15 963.83 231.35 964.83 231.95 L966.27 231.95 L966.67 209.15 C967.37 220.15 967.97 231.35 968.97 231.95 L970.40 231.95 L970.80 209.15 C971.50 220.15 972.10 231.35 973.10 231.95 L974.54 231.95 L974.94 209.15 C975.64 220.15 976.24 231.35 977.24 231.95 L978.67 231.95 L979.07 209.15 C979.77 220.15 980.37 231.35 981.37 231.95 L982.81 231.95 L983.21 209.15 L987.51 231.95 L989.21 231.95 L989.61 209.15 C990.31 220.15 990.91 231.35 991.91 231.95 L993.35 231.95 L993.75 209.15 C994.45 220.15 995.05 231.35 996.05 231.95 L997.48 231.95 L997.88 209.15 C998.58 220.15 999.18 231.35 1000.18 231.95 L1001.62 231.95 L1002.02 209.15 C1002.72 220.15 1003.32 231.35 1004.32 231.95 L1005.75 231.95 L1006.15 209.15 C1006.85 220.15 1007.45 231.35 1008.45 231.95 L1009.88 231.95 L1010.28 209.15 C1010.98 220.15 1011.58 231.35 1012.58 231.95 L1014.02 231.95 L1014.42 209.15 C1015.12 220.15 1015.72 231.35 1016.72 231.95 L1018.15 231.95 L1018.55 209.15 C1019.25 220.15 1019.85 231.35 1020.85 231.95 L1022.29 231.95 L1022.69 209.15 C1023.39 220.15 1023.99 231.35 1024.99 231.95 L1026.42 231.95 L1026.82 209.15 C1027.52 220.15 1028.12 231.35 1029.12 231.95 L1030.56 231.95 L1030.96 209.15 C1031.66 220.15 1032.26 231.35 1033.26 231.95 L1034.69 231.95 L1035.09 209.15 C1035.79 220.15 1036.39 231.35 1037.39 231.95 L1038.83 231.95 L1039.23 209.15 C1039.93 220.15 1040.53 231.35 1041.53 231.95 L1042.96 231.95 L1043.36 209.15 C1044.06 220.15 1044.66 231.35 1045.66 231.95 L1047.09 231.95 L1047.49 209.15 C1048.19 220.15 1048.79 231.35 1049.79 231.95 L1051.23 231.95 L1051.63 209.15 C1052.33 220.15 1052.93 231.35 1053.93 231.95 L1055.36 231.95 L1055.76 209.15 C1056.46 220.15 1057.06 231.35 1058.06 231.95 L1059.50 231.95 L1059.90 209.15 C1060.60 220.15 1061.20 231.35 1062.20 231.95 L1063.63 231.95 L1064.03 209.15 C1064.73 220.15 1065.33 231.35 1066.33 231.95 L1067.77 231.95 L1068.17 209.15 C1068.87 220.15 1069.47 231.35 1070.47 231.95 L1071.90 231.95 L1072.30 209.15 C1073.00 220.15 1073.60 231.35 1074.60 231.95 L1076.04 231.95 L1076.44 209.15 C1077.14 220.15 1077.74 231.35 1078.74 231.95 L1080.17 231.95 L1080.57 209.15 C1081.27 220.15 1081.87 231.35 1082.87 231.95 L1084.30 231.95 L1084.70 209.15 C1085.40 220.15 1086.00 231.35 1087.00 231.95 L1088.44 231.95 L1088.84 209.15 C1089.54 220.15 1090.14 231.35 1091.14 231.95 L1092.57 231.95 L1092.97 209.15 C1093.67 220.15 1094.27 231.35 1095.27 231.95 L1096.71 231.95 L1097.11 209.15 C1097.81 220.15 1098.41 231.35 1099.41 231.95 L1100.84 231.95 L1101.24 209.15 C1101.94 220.15 1102.54 231.35 1103.54 231.95 L1104.98 231.95 L1105.38 209.15 C1106.08 220.15 1106.68 231.35 1107.68 231.95 L1109.11 231.95 L1109.51 209.15 L1113.81 231.95 L1115.52 231.95 L1115.92 209.15 C1116.62 220.15 1117.22 231.35 1118.22 231.95 L1119.65 231.95 L1120.05 209.15 C1120.75 220.15 1121.35 231.35 1122.35 231.95 L1123.79 231.95 L1124.19 209.15 C1124.89 220.15 1125.49 231.35 1126.49 231.95 L1127.92 231.95 L1128.32 209.15 C1129.02 220.15 1129.62 231.35 1130.62 231.95 L1132.06 231.95 L1132.46 209.15 C1133.16 220.15 1133.76 231.35 1134.76 231.95 L1136.19 231.95 L1136.59 209.15 C1137.29 220.15 1137.89 231.35 1138.89 231.95 L1140.32 231.95 L1140.72 209.15 C1141.42 220.15 1142.02 231.35 1143.02 231.95 L1144.46 231.95 L1144.86 209.15 C1145.56 220.15 1146.16 231.35 1147.16 231.95 L1148.59 231.95 L1148.99 209.15 C1149.69 220.15 1150.29 231.35 1151.29 231.95 L1152.73 231.95 L1153.13 209.15 C1153.83 220.15 1154.43 231.35 1155.43 231.95 L1156.86 231.95 L1157.26 209.15 C1157.96 220.15 1158.56 231.35 1159.56 231.95 L1161.00 231.95 L1161.40 209.15 C1162.10 220.15 1162.70 231.35 1163.70 231.95 L1165.13 231.95 L1165.53 209.15 C1166.23 220.15 1166.83 231.35 1167.83 231.95 L1169.27 231.95 L1169.67 209.15 C1170.37 220.15 1170.97 231.35 1171.97 231.95 L1173.40 231.95 L1173.80 209.15" stroke="#1f7dff" stroke-width="0.95" fill="none" stroke-linejoin="round"/></svg>
<div class="card" style="left:130.3px;top:272px;width:1061.2px;height:340px"></div>
<div id="t41" class="t b" style="left:140.30px;top:288.00px;">会话统计</div>
<svg class="abs" style="left:170.80px;top:284.50px" width="7" height="7" viewBox="0 0 7 7"><circle cx="3.5" cy="3.5" r="2.90" fill="none" stroke="#a4a9b1" stroke-width="0.55"/><path d="M3.5 3.1V5M3.5 2V2.5" stroke="#a4a9b1" stroke-width="0.6"/></svg>
<div class="abs" style="left:140.3px;top:301.3px;width:22.4px;height:16.4px;background:#f0f1f4;border-radius:1.5px"></div>
<svg class="abs" style="left:146.80px;top:305.10px" width="9" height="9" viewBox="-4.5 -4.5 9 9"><path d="M2.46 -1.71 A3.00 3.00 0 1 0 2.88 0.84" fill="none" stroke="#30343b" stroke-width="0.90"/><path d="M3.15 -3.45 L3.00 -1.05 L0.75 -1.80 Z" fill="#30343b"/></svg>
<div class="sel" style="left:167.00px;top:301.10px;width:60.70px;height:16.80px"></div>
<div id="t42" class="t " style="left:173.40px;top:310.10px;"><span class="l">1</span>天</div>
<svg class="abs" style="left:215.35px;top:308.35px" width="5.30" height="3.30" viewBox="0 0 5.30 3.30"><path d="M0.5 0.5 L2.65 2.80 L4.80 0.5" fill="none" stroke="#2b2f36" stroke-width="0.85"/></svg>
<div class="sel" style="left:231.30px;top:301.10px;width:161.40px;height:16.80px"></div>
<svg class="abs" style="left:239.3px;top:306.3px" width="6.4" height="6" viewBox="0 0 6.4 6"><path d="M0.3 1H5.7M0.3 3.1H4.2M0.3 5.2H2.7" stroke="#868b94" stroke-width="0.65" fill="none"/></svg>
<div id="t43" class="t " style="left:247.80px;top:309.70px;color:#565b64;font-size:7px">监听器</div>
<svg class="abs" style="left:379.5px;top:306.5px" width="6" height="6" viewBox="0 0 6 6"><circle cx="2.6" cy="2.6" r="1.9" fill="none" stroke="#3a3f47" stroke-width="0.65"/><path d="M4 4L5.5 5.5" stroke="#3a3f47" stroke-width="0.65"/></svg>
<div id="t44" class="t th" style="left:143.70px;top:333.90px;">访问时间</div>
<div id="t45" class="t th" style="left:252.90px;top:333.90px;">监听器</div>
<div class="abs" style="left:248.40px;top:330.50px;width:0.7px;height:6.4px;background:#d8dade"></div>
<div id="t46" class="t th" style="left:361.20px;top:333.90px;">客户端<span class="l">IP</span></div>
<div class="abs" style="left:356.70px;top:330.50px;width:0.7px;height:6.4px;background:#d8dade"></div>
<div id="t47" class="t th" style="left:469.50px;top:333.90px;">前端<span class="l">IP</span></div>
<div class="abs" style="left:465.00px;top:330.50px;width:0.7px;height:6.4px;background:#d8dade"></div>
<div id="t48" class="t th" style="left:578.50px;top:333.90px;">后端服务器<span class="l">IP</span></div>
<div class="abs" style="left:574.00px;top:330.50px;width:0.7px;height:6.4px;background:#d8dade"></div>
<div id="t49" class="t th" style="left:687.90px;top:333.90px;">状态码</div>
<div class="abs" style="left:683.40px;top:330.50px;width:0.7px;height:6.4px;background:#d8dade"></div>
<div id="t50" class="t th" style="left:765.20px;top:333.90px;">流入流量</div>
<div class="abs" style="left:760.70px;top:330.50px;width:0.7px;height:6.4px;background:#d8dade"></div>
<div id="t51" class="t th" style="left:842.90px;top:333.90px;">流出流量</div>
<div class="abs" style="left:838.40px;top:330.50px;width:0.7px;height:6.4px;background:#d8dade"></div>
<div id="t52" class="t th" style="left:920.20px;top:333.90px;">活跃连接数</div>
<div class="abs" style="left:915.70px;top:330.50px;width:0.7px;height:6.4px;background:#d8dade"></div>
<div id="t53" class="t th" style="left:997.90px;top:333.90px;">并发连接数</div>
<div class="abs" style="left:993.40px;top:330.50px;width:0.7px;height:6.4px;background:#d8dade"></div>
<div id="t54" class="t th" style="left:1075.50px;top:333.90px;">聚合日志数</div>
<div class="abs" style="left:1071.00px;top:330.50px;width:0.7px;height:6.4px;background:#d8dade"></div>
<div class="abs" style="left:1180.00px;top:330.50px;width:0.7px;height:6.4px;background:#d8dade"></div>
<svg class="abs" style="left:176.2px;top:330.5px" width="4" height="7" viewBox="0 0 4 7"><path d="M0.3 2.9L2 0.6L3.7 2.9Z M0.3 4.1L2 6.4L3.7 4.1Z" fill="#b2b6bd"/></svg>
<svg class="abs" style="left:1114.00px;top:330.20px" width="7" height="7" viewBox="0 0 7 7"><circle cx="3.5" cy="3.5" r="2.40" fill="none" stroke="#a4a9b1" stroke-width="0.55"/><path d="M3.5 3.1V5M3.5 2V2.5" stroke="#a4a9b1" stroke-width="0.6"/></svg>
<div class="hl" style="left:140.3px;top:343.20px;width:1041px"></div>
<div id="t55" class="t num" style="left:143.70px;top:357.03px;">2025-04-07 11:59:43</div>
<div id="t56" class="t num lnk" style="left:252.90px;top:357.03px;"><span class="c">监听器</span>2-tcp</div>
<div id="t57" class="t num" style="left:361.20px;top:357.03px;">172.24.7.94</div>
<div id="t58" class="t num" style="left:469.50px;top:357.03px;">172.24.7.91</div>
<div id="t59" class="t num" style="left:578.50px;top:357.03px;">10.6.106.228</div>
<div id="t60" class="t num" style="left:687.90px;top:357.03px;">-</div>
<div id="t61" class="t num" style="left:765.20px;top:357.03px;">94 B</div>
<div id="t62" class="t num" style="left:842.90px;top:357.03px;">265 B</div>
<div id="t63" class="t num" style="left:920.20px;top:357.03px;">2</div>
<div id="t64" class="t num" style="left:997.90px;top:357.03px;">1</div>
<div id="t65" class="t num" style="left:1075.50px;top:357.03px;">1</div>
<div class="hl" style="left:140.3px;top:365.93px;width:1041px"></div>
<div id="t66" class="t num" style="left:143.70px;top:379.49px;">2025-04-07 11:59:43</div>
<div id="t67" class="t num lnk" style="left:252.90px;top:379.49px;"><span class="c">监听器</span>2-tcp</div>
<div id="t68" class="t num" style="left:361.20px;top:379.49px;">172.24.7.94</div>
<div id="t69" class="t num" style="left:469.50px;top:379.49px;">172.24.7.91</div>
<div id="t70" class="t num" style="left:578.50px;top:379.49px;">10.6.106.145</div>
<div id="t71" class="t num" style="left:687.90px;top:379.49px;">-</div>
<div id="t72" class="t num" style="left:765.20px;top:379.49px;">94 B</div>
<div id="t73" class="t num" style="left:842.90px;top:379.49px;">265 B</div>
<div id="t74" class="t num" style="left:920.20px;top:379.49px;">3</div>
<div id="t75" class="t num" style="left:997.90px;top:379.49px;">2</div>
<div id="t76" class="t num" style="left:1075.50px;top:379.49px;">1</div>
<div class="hl" style="left:140.3px;top:388.66px;width:1041px"></div>
<div id="t77" class="t num" style="left:143.70px;top:401.95px;">2025-04-07 11:59:43</div>
<div id="t78" class="t num lnk" style="left:252.90px;top:401.95px;"><span class="c">监听器</span>2-tcp</div>
<div id="t79" class="t num" style="left:361.20px;top:401.95px;">172.24.7.94</div>
<div id="t80" class="t num" style="left:469.50px;top:401.95px;">172.24.7.91</div>
<div id="t81" class="t num" style="left:578.50px;top:401.95px;">10.6.106.194</div>
<div id="t82" class="t num" style="left:687.90px;top:401.95px;">-</div>
<div id="t83" class="t num" style="left:765.20px;top:401.95px;">94 B</div>
<div id="t84" class="t num" style="left:842.90px;top:401.95px;">265 B</div>
<div id="t85" class="t num" style="left:920.20px;top:401.95px;">1</div>
<div id="t86" class="t num" style="left:997.90px;top:401.95px;">0</div>
<div id="t87" class="t num" style="left:1075.50px;top:401.95px;">1</div>
<div class="hl" style="left:140.3px;top:411.39px;width:1041px"></div>
<div id="t88" class="t num" style="left:143.70px;top:425.41px;">2025-04-07 11:59:42</div>
<div id="t89" class="t num lnk" style="left:252.90px;top:425.41px;"><span class="c">监听器</span>2-tcp</div>
<div id="t90" class="t num" style="left:361.20px;top:425.41px;">172.24.7.95</div>
<div id="t91" class="t num" style="left:469.50px;top:425.41px;">172.24.7.91</div>
<div id="t92" class="t num" style="left:578.50px;top:425.41px;">10.6.106.228</div>
<div id="t93" class="t num" style="left:687.90px;top:425.41px;">-</div>
<div id="t94" class="t num" style="left:765.20px;top:425.41px;">94 B</div>
<div id="t95" class="t num" style="left:842.90px;top:425.41px;">265 B</div>
<div id="t96" class="t num" style="left:920.20px;top:425.41px;">2</div>
<div id="t97" class="t num" style="left:997.90px;top:425.41px;">1</div>
<div id="t98" class="t num" style="left:1075.50px;top:425.41px;">1</div>
<div class="hl" style="left:140.3px;top:434.12px;width:1041px"></div>
<div id="t99" class="t num" style="left:143.70px;top:447.87px;">2025-04-07 11:59:42</div>
<div id="t100" class="t num lnk" style="left:252.90px;top:447.87px;"><span class="c">监听器</span>2-tcp</div>
<div id="t101" class="t num" style="left:361.20px;top:447.87px;">172.24.7.95</div>
<div id="t102" class="t num" style="left:469.50px;top:447.87px;">172.24.7.91</div>
<div id="t103" class="t num" style="left:578.50px;top:447.87px;">10.6.106.145</div>
<div id="t104" class="t num" style="left:687.90px;top:447.87px;">-</div>
<div id="t105" class="t num" style="left:765.20px;top:447.87px;">94 B</div>
<div id="t106" class="t num" style="left:842.90px;top:447.87px;">265 B</div>
<div id="t107" class="t num" style="left:920.20px;top:447.87px;">3</div>
<div id="t108" class="t num" style="left:997.90px;top:447.87px;">2</div>
<div id="t109" class="t num" style="left:1075.50px;top:447.87px;">1</div>
<div class="hl" style="left:140.3px;top:456.85px;width:1041px"></div>
<div id="t110" class="t num" style="left:143.70px;top:470.33px;">2025-04-07 11:59:42</div>
<div id="t111" class="t num lnk" style="left:252.90px;top:470.33px;"><span class="c">监听器</span>2-tcp</div>
<div id="t112" class="t num" style="left:361.20px;top:470.33px;">172.24.7.95</div>
<div id="t113" class="t num" style="left:469.50px;top:470.33px;">172.24.7.91</div>
<div id="t114" class="t num" style="left:578.50px;top:470.33px;">10.6.106.145</div>
<div id="t115" class="t num" style="left:687.90px;top:470.33px;">-</div>
<div id="t116" class="t num" style="left:765.20px;top:470.33px;">94 B</div>
<div id="t117" class="t num" style="left:842.90px;top:470.33px;">265 B</div>
<div id="t118" class="t num" style="left:920.20px;top:470.33px;">4</div>
<div id="t119" class="t num" style="left:997.90px;top:470.33px;">3</div>
<div id="t120" class="t num" style="left:1075.50px;top:470.33px;">1</div>
<div class="hl" style="left:140.3px;top:479.58px;width:1041px"></div>
<div id="t121" class="t num" style="left:143.70px;top:492.79px;">2025-04-07 11:59:42</div>
<div id="t122" class="t num lnk" style="left:252.90px;top:492.79px;"><span class="c">监听器</span>2-tcp</div>
<div id="t123" class="t num" style="left:361.20px;top:492.79px;">172.24.7.95</div>
<div id="t124" class="t num" style="left:469.50px;top:492.79px;">172.24.7.91</div>
<div id="t125" class="t num" style="left:578.50px;top:492.79px;">10.6.106.194</div>
<div id="t126" class="t num" style="left:687.90px;top:492.79px;">-</div>
<div id="t127" class="t num" style="left:765.20px;top:492.79px;">94 B</div>
<div id="t128" class="t num" style="left:842.90px;top:492.79px;">265 B</div>
<div id="t129" class="t num" style="left:920.20px;top:492.79px;">5</div>
<div id="t130" class="t num" style="left:997.90px;top:492.79px;">4</div>
<div id="t131" class="t num" style="left:1075.50px;top:492.79px;">1</div>
<div class="hl" style="left:140.3px;top:502.31px;width:1041px"></div>
<div id="t132" class="t num" style="left:143.70px;top:516.25px;">2025-04-07 11:59:42</div>
<div id="t133" class="t num lnk" style="left:252.90px;top:516.25px;"><span class="c">监听器</span>2-tcp</div>
<div id="t134" class="t num" style="left:361.20px;top:516.25px;">172.24.7.95</div>
<div id="t135" class="t num" style="left:469.50px;top:516.25px;">172.24.7.91</div>
<div id="t136" class="t num" style="left:578.50px;top:516.25px;">10.6.106.194</div>
<div id="t137" class="t num" style="left:687.90px;top:516.25px;">-</div>
<div id="t138" class="t num" style="left:765.20px;top:516.25px;">94 B</div>
<div id="t139" class="t num" style="left:842.90px;top:516.25px;">265 B</div>
<div id="t140" class="t num" style="left:920.20px;top:516.25px;">1</div>
<div id="t141" class="t num" style="left:997.90px;top:516.25px;">0</div>
<div id="t142" class="t num" style="left:1075.50px;top:516.25px;">1</div>
<div class="hl" style="left:140.3px;top:525.04px;width:1041px"></div>
<div id="t143" class="t num" style="left:143.70px;top:538.71px;">2025-04-07 11:59:33</div>
<div id="t144" class="t num lnk" style="left:252.90px;top:538.71px;"><span class="c">监听器</span>1-http</div>
<div id="t145" class="t num" style="left:361.20px;top:538.71px;">172.24.7.94</div>
<div id="t146" class="t num" style="left:469.50px;top:538.71px;">172.24.7.91</div>
<div id="t147" class="t num" style="left:578.50px;top:538.71px;">10.6.106.228</div>
<div id="t148" class="t num" style="left:687.90px;top:538.71px;">200</div>
<div id="t149" class="t num" style="left:765.20px;top:538.71px;">92 B</div>
<div id="t150" class="t num" style="left:842.90px;top:538.71px;">233 B</div>
<div id="t151" class="t num" style="left:920.20px;top:538.71px;">2</div>
<div id="t152" class="t num" style="left:997.90px;top:538.71px;">0</div>
<div id="t153" class="t num" style="left:1075.50px;top:538.71px;">1</div>
<div class="hl" style="left:140.3px;top:547.77px;width:1041px"></div>
<div id="t154" class="t num" style="left:143.70px;top:561.17px;">2025-04-07 11:59:33</div>
<div id="t155" class="t num lnk" style="left:252.90px;top:561.17px;"><span class="c">监听器</span>1-http</div>
<div id="t156" class="t num" style="left:361.20px;top:561.17px;">172.24.7.94</div>
<div id="t157" class="t num" style="left:469.50px;top:561.17px;">172.24.7.91</div>
<div id="t158" class="t num" style="left:578.50px;top:561.17px;">10.6.106.145</div>
<div id="t159" class="t num" style="left:687.90px;top:561.17px;">200</div>
<div id="t160" class="t num" style="left:765.20px;top:561.17px;">92 B</div>
<div id="t161" class="t num" style="left:842.90px;top:561.17px;">233 B</div>
<div id="t162" class="t num" style="left:920.20px;top:561.17px;">3</div>
<div id="t163" class="t num" style="left:997.90px;top:561.17px;">1</div>
<div id="t164" class="t num" style="left:1075.50px;top:561.17px;">1</div>
<div class="hl" style="left:140.3px;top:570.50px;width:1041px"></div>
<div id="t165" class="t num" style="left:140.30px;top:586.00px;color:#4a4f57"><span class="c">第</span> 1-10 <span class="c">项, 共</span> 1000 <span class="c">项</span></div>
<div id="t166" class="t num" style="left:976.40px;top:586.70px;transform:translate(-50%,-50%);color:#1b5fd0;font-weight:bold">1</div>
<div id="t167" class="t num" style="left:988.40px;top:586.70px;transform:translate(-50%,-50%);">2</div>
<div id="t168" class="t num" style="left:1000.30px;top:586.70px;transform:translate(-50%,-50%);">3</div>
<div id="t169" class="t num" style="left:1012.40px;top:586.70px;transform:translate(-50%,-50%);">4</div>
<div id="t170" class="t num" style="left:1024.50px;top:586.70px;transform:translate(-50%,-50%);">5</div>
<div id="t171" class="t num" style="left:1056.20px;top:586.70px;transform:translate(-50%,-50%);">100</div>
<div class="t" style="left:1038.80px;top:585.60px;transform:translate(-50%,-50%);color:#8a8f98;letter-spacing:0.9px;font-size:7.5px;font-weight:bold">&#183;&#183;&#183;</div>
<svg class="abs" style="left:962.60px;top:583.10px" width="3.8" height="5.4" viewBox="0 0 3.8 5.4"><path d="M3 0.5L0.8 2.7L3 4.9" fill="none" stroke="#c3c6cc" stroke-width="0.7"/></svg>
<svg class="abs" style="left:1068.80px;top:583.10px" width="3.8" height="5.4" viewBox="0 0 3.8 5.4"><path d="M0.8 0.5L3 2.7L0.8 4.9" fill="none" stroke="#3a3f47" stroke-width="0.7"/></svg>
<div class="sel" style="left:1079.00px;top:578.00px;width:44.80px;height:15.40px"></div>
<div id="t172" class="t num" style="left:1083.50px;top:586.70px;color:#2b2f36">10 <span class="c">项</span>/<span class="c">页</span></div>
<svg class="abs" style="left:1111.80px;top:583.80px" width="5.40" height="3.60" viewBox="0 0 5.40 3.60"><path d="M0.5 0.5 L2.70 3.10 L4.90 0.5" fill="none" stroke="#2b2f36" stroke-width="0.90"/></svg>
<div id="t173" class="t num" style="left:1129.50px;top:586.70px;color:#2b2f36"><span class="c">跳至</span></div>
<div class="sel" style="left:1148.30px;top:578.00px;width:21.70px;height:15.40px"></div>
<div id="t174" class="t num" style="left:1174.00px;top:586.70px;color:#2b2f36"><span class="c">页</span></div>
</div></body></html>
